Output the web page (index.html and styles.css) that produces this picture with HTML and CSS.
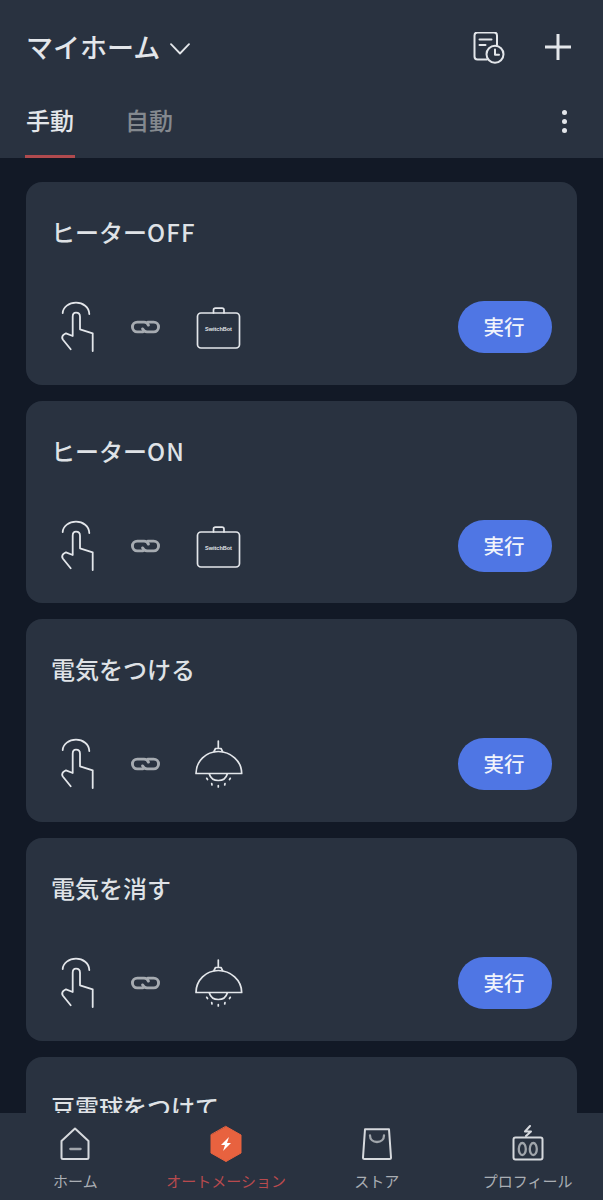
FILE: index.html
```html
<!DOCTYPE html>
<html lang="ja">
<head>
<meta charset="UTF-8">
<title>マイホーム</title>
<meta name="viewport" content="width=device-width, initial-scale=1.0">
<link rel="stylesheet" href="styles.css">
</head>
<body>
<svg class="defs" width="0" height="0">
<symbol id="hand" viewBox="0 0 36 54">
<path d="M2.700 13C3 7 9 2.700 16 2.700S29 7 29.300 14"/>
<path d="M10.700 49.300 2.800 39.500C1.800 38 2.300 36 3.600 34.700L6 33.300 12.700 36V16.700C12.700 14 14 12.700 16 12.700S20 14 20 16.700V29.300L32.700 33.300V51"/>
</symbol>
<symbol id="chain" viewBox="0 0 30 14">
<path d="M12.500 12H6.500A5 5 0 0 1 6.500 2H13.500A5 5 0 0 1 18 5"/>
<path d="M17.500 2H23.500A5 5 0 0 1 23.500 12H16.500A5 5 0 0 1 12 9"/>
</symbol>
<symbol id="bot" viewBox="0 0 48 46">
<path d="M18.500 9V6C18.500 4.800 19.300 4.200 20.500 4.200H27C28.200 4.200 29 4.800 29 6V9"/>
<rect x="2.500" y="9" width="42" height="35" rx="3.500"/>
</symbol>
<symbol id="lamp" viewBox="0 0 48 48">
<path d="M23.300 1V8M19 11.500 20.500 8.500H26L27.500 11.500"/>
<path d="M1 33.500C1 21 11 11.500 23.300 11.500S46.700 21 46.700 33.500ZM14.300 34C15.500 38 19 40.500 23.300 40.500S31.200 38 32.300 34"/>
<path d="M11.700 38.300 12.500 39.500M16.700 43.500 17 45M23.300 45.500V47M30 43.500 29.700 45M35.300 38.300 34.500 39.500"/>
</symbol>
</svg>

<header class="top">
<div class="top-row">
<div class="home-name">マイホーム
<svg class="chevron" width="20" height="12" viewBox="0 0 20 12"><path d="M1 1.200 10 10.500 19 1.200"/></svg>
</div>
<div class="top-icons">
<svg width="32" height="32" viewBox="0 0 32 32" class="ico-log">
<path d="M14 27.500H4.500C2.500 27.500 1.500 26.500 1.500 24.500V3.500C1.500 1.500 2.500.5 4.500.5H21C23 .5 24 1.500 24 3.500V13"/>
<path d="M6.500 7.500H18.500M6.500 13H12.500"/>
<circle cx="22" cy="22.300" r="8.500"/>
<path d="M22 17.500V22.800H26"/>
</svg>
<svg width="26" height="26" viewBox="0 0 26 26" class="ico-plus"><path d="M13 0V26M0 13H26"/></svg>
</div>
</div>
<div class="tabs">
<div class="tab active">手動</div>
<div class="tab">自動</div>
<div class="more"><i></i><i></i><i></i></div>
</div>
</header>

<main class="list">
<section class="card">
<h3>ヒーター<span class="latin">OFF</span></h3>
<div class="card-row">
<svg class="i-hand"><use href="#hand"/></svg>
<svg class="i-chain"><use href="#chain"/></svg>
<div class="device">
<svg class="i-bot"><use href="#bot"/></svg>
<span class="bot-name">SwitchBot</span>
</div>
<button class="run">実行</button>
</div>
</section>
<section class="card">
<h3>ヒーター<span class="latin">ON</span></h3>
<div class="card-row">
<svg class="i-hand"><use href="#hand"/></svg>
<svg class="i-chain"><use href="#chain"/></svg>
<div class="device">
<svg class="i-bot"><use href="#bot"/></svg>
<span class="bot-name">SwitchBot</span>
</div>
<button class="run">実行</button>
</div>
</section>
<section class="card">
<h3>電気をつける</h3>
<div class="card-row">
<svg class="i-hand"><use href="#hand"/></svg>
<svg class="i-chain"><use href="#chain"/></svg>
<div class="device"><svg class="i-lamp"><use href="#lamp"/></svg></div>
<button class="run">実行</button>
</div>
</section>
<section class="card">
<h3>電気を消す</h3>
<div class="card-row">
<svg class="i-hand"><use href="#hand"/></svg>
<svg class="i-chain"><use href="#chain"/></svg>
<div class="device"><svg class="i-lamp"><use href="#lamp"/></svg></div>
<button class="run">実行</button>
</div>
</section>
<section class="card">
<h3>豆電球をつけて</h3>
</section>
</main>

<nav class="bottom">
<div class="nav-item">
<svg width="36" height="38" viewBox="0 0 36 38">
<path d="M18 3.500 31.500 16V32.500C31.500 33.500 31 34 30 34H6C5 34 4.500 33.500 4.500 32.500V16Z"/>
<path class="dim" d="M13.300 24H23.600"/>
</svg>
<span>ホーム</span>
</div>
<div class="nav-item on">
<svg width="36" height="38" viewBox="0 0 36 38">
<path class="hex" d="M18 1.500 33 10V28L18 36.500 3 28V10Z"/>
<path class="bolt" d="M21 12 13 20H17L15 26 23 18H19Z"/>
</svg>
<span>オートメーション</span>
</div>
<div class="nav-item">
<svg width="36" height="38" viewBox="0 0 36 38">
<path d="M6 4.300H30L32 32.500C32 33.500 31.500 34 30.500 34H5.500C4.500 34 4 33.500 4 32.500Z"/>
<path class="dim" d="M11 10.500C11 14.500 14 17 18 17S25 14.500 25 10.500"/>
</svg>
<span>ストア</span>
</div>
<div class="nav-item">
<svg width="36" height="38" viewBox="0 0 36 38">
<path d="M20 1 15 6.500 21 6.500 16 11"/>
<rect x="3.500" y="12.500" width="29" height="22" rx="2"/>
<ellipse class="dim" cx="12.300" cy="24" rx="3.500" ry="6"/>
<ellipse class="dim" cx="23.300" cy="24" rx="3.500" ry="6"/>
</svg>
<span>プロフィール</span>
</div>
</nav>
</body>
</html>
```

FILE: styles.css
```css
* {
box-sizing: border-box;
}

html, body {
margin: 0;
height: 1200px;
}

body {
font-family: "Noto Sans CJK JP", "Noto Sans", sans-serif;
display: flex;
flex-direction: column;
overflow: hidden;
background: #121926;
color: #e3e6ea;
}

svg {
fill: none;
stroke: #e3e6ea;
stroke-width: 2;
stroke-linecap: round;
stroke-linejoin: round;
display: block;
}

.defs {
position: absolute;
}

/* ヘッダー */
.top {
height: 158px;
flex: none;
background: #293240;
padding: 0 25px 0 26px;
}

.top-row {
height: 94px;
display: flex;
align-items: center;
justify-content: space-between;
}

.home-name {
display: flex;
align-items: center;
font-size: 27px;
font-weight: 500;
line-height: 40px;
}

.chevron {
margin-left: 10px;
margin-top: 3px;
stroke-width: 1.800;
}

.top-icons {
display: flex;
align-items: center;
margin-right: 7px;
}

.ico-log {
margin-top: 1px;
margin-right: 40px;
}

.ico-plus {
stroke-width: 3;
stroke-linecap: butt;
}

.tabs {
height: 64px;
display: flex;
align-items: flex-start;
position: relative;
}

.tab {
font-size: 24px;
font-weight: 500;
line-height: 52px;
height: 64px;
width: 50px;
margin-right: 50px;
margin-left: -1px;
padding-left: 1px;
color: #84898f;
}

.tab.active {
color: #e3e6ea;
border-bottom: 3px solid #b04a4e;
}

.more {
margin-left: auto;
margin-right: 11px;
margin-top: 16px;
display: flex;
flex-direction: column;
gap: 4px;
}

.more i {
display: block;
width: 5px;
height: 5px;
border-radius: 50%;
background: #e3e6ea;
}

/* 一覧 */
.list {
flex: 1;
min-height: 0;
overflow: hidden;
padding: 24px 26px 0;
display: flex;
flex-direction: column;
gap: 16px;
}

.card {
flex: none;
height: 202.700px;
background: #293240;
border-radius: 16px;
padding: 32px 25px 0 25px;
}

.card h3 {
margin: 0;
font-size: 24px;
font-weight: 500;
line-height: 36px;
color: #dfe2e6;
}

.card h3 .latin {
letter-spacing: 1.200px;
}

.card-row {
display: flex;
align-items: center;
height: 52px;
margin-top: 51px;
}

.i-hand {
width: 36px;
height: 54px;
margin-left: 9px;
stroke-width: 1.800;
}

.i-chain {
width: 29px;
height: 14px;
margin-left: 35px;
stroke: #a6abb1;
stroke-width: 3;
}

.device {
width: 48px;
height: 48px;
margin-left: 35px;
position: relative;
}

.i-bot, .i-lamp {
width: 48px;
height: 48px;
stroke-width: 1.700;
}

.bot-name {
position: absolute;
left: 0;
width: 47px;
top: 22px;
text-align: center;
font-family: "Liberation Sans", sans-serif;
font-size: 5.500px;
font-weight: 700;
line-height: 8px;
}

.run {
margin-left: auto;
width: 94px;
height: 52px;
border: none;
border-radius: 26px;
background: #4f76e4;
color: #f1f4fb;
font-family: inherit;
font-size: 20.500px;
font-weight: 500;
padding: 0 2px 2px 0;
}

/* 下部ナビ */
.bottom {
height: 87px;
flex: none;
background: #293240;
display: grid;
grid-template-columns: repeat(4, 1fr);
padding-top: 12px;
}

.nav-item {
display: flex;
flex-direction: column;
align-items: center;
}

.nav-item span {
font-size: 15px;
line-height: 22px;
margin-top: 7px;
color: #a9aeb4;
}

.nav-item.on span {
color: #b84a4e;
}

.nav-item svg {
stroke: #d6d9dd;
}

.nav-item .dim {
stroke: #a0a5ab;
stroke-width: 2.300;
}

.nav-item .hex {
fill: #e8623f;
stroke: #e8623f;
stroke-width: 1;
}

.nav-item .bolt {
fill: #fff;
stroke: none;
}
```
